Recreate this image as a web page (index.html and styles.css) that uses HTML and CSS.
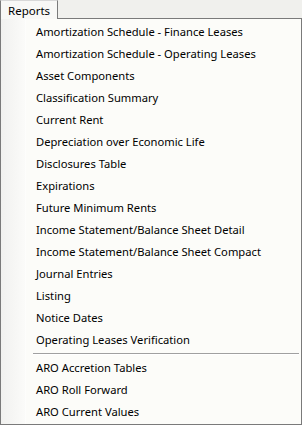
FILE: index.html
```html
<!DOCTYPE html>
<html lang="en">
  <head>
    <meta charset="UTF-8" />
    <title>Reports</title>
    <link rel="stylesheet" href="styles.css">
  </head>
  <body>
    <div class="menubar">
      <div class="tab">Reports</div>
    </div>
    <div class="menu">
      <div class="item">Amortization Schedule - Finance Leases</div>
      <div class="item">Amortization Schedule - Operating Leases</div>
      <div class="item">Asset Components</div>
      <div class="item">Classification Summary</div>
      <div class="item">Current Rent</div>
      <div class="item">Depreciation over Economic Life</div>
      <div class="item">Disclosures Table</div>
      <div class="item">Expirations</div>
      <div class="item">Future Minimum Rents</div>
      <div class="item">Income Statement/Balance Sheet Detail</div>
      <div class="item">Income Statement/Balance Sheet Compact</div>
      <div class="item">Journal Entries</div>
      <div class="item">Listing</div>
      <div class="item">Notice Dates</div>
      <div class="item">Operating Leases Verification</div>
      <div class="sep"></div>
      <div class="item">ARO Accretion Tables</div>
      <div class="item">ARO Roll Forward</div>
      <div class="item">ARO Current Values</div>
    </div>
  </body>
</html>
```

FILE: styles.css
```css
body {
  margin: 0;
  background-color: #f0f0ed;
  font-family: "Noto Sans", "DejaVu Sans", sans-serif;
  font-size: 11.2px;
  color: #000;
}
.menubar {
  height: 19px;
  display: flex;
}
.tab {
  width: 58px;
  height: 19px;
  padding-left: 7px;
  line-height: 19px;
  font-size: 11.5px;
  background-color: #f8f8f6;
  border-left: 1px solid #7a7a7a;
  border-right: 1px solid #7a7a7a;
  border-top: 1px solid #d8d8d8;
  box-sizing: border-box;
}
.menu {
  height: 406px;
  box-sizing: border-box;
  border: 1px solid #7a7a7a;
  border-top: 0;
  padding: 2px 0 1px 0;
  background: linear-gradient(to right, #f1f1ef 0, #fbfbf9 24px, #ffffff 24px, #fcfcf9 25px, #fcfcf9 100%);
  position: relative;
}
.menu::before {
  content: "";
  position: absolute;
  top: -1px;
  left: 57px;
  right: -1px;
  border-top: 1px solid #7a7a7a;
}
.item {
  height: 22px;
  line-height: 22px;
  padding-left: 35px;
  white-space: nowrap;
}
.sep {
  height: 6px;
  margin-left: 32px;
  margin-right: 2px;
  box-sizing: border-box;
  border-top: 2px solid transparent;
}
.sep::after {
  content: "";
  display: block;
  border-top: 1px solid #a0a0a0;
  border-bottom: 1px solid #ffffff;
}
```
